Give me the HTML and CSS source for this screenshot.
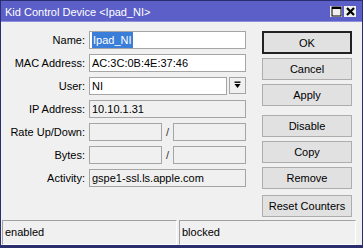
FILE: index.html
```html
<!DOCTYPE html>
<html>
<head>
<meta charset="utf-8">
<link rel="stylesheet" href="styles.css">
</head>
<body>
<div class="window">
  <div class="titlebar">
    <span class="title">Kid Control Device &lt;Ipad_NI&gt;</span>
    <div class="ctrls">
      <span class="ctrl"><svg width="11" height="11" viewBox="0 0 11 11"><rect x="1" y="1" width="9" height="9" fill="none" stroke="#000" stroke-width="1"/><rect x="1" y="1" width="9" height="2" fill="#000"/></svg></span>
      <span class="ctrl"><svg width="11" height="11" viewBox="0 0 11 11"><path d="M2 2 L9 9 M9 2 L2 9" stroke="#000" stroke-width="2.2"/></svg></span>
    </div>
  </div>
  <div class="body">
    <div class="form">
      <label class="lbl">Name:</label>
      <div class="field"><span class="sel">Ipad_NI</span></div>
      <label class="lbl">MAC Address:</label>
      <div class="field">AC:3C:0B:4E:37:46</div>
      <label class="lbl">User:</label>
      <div class="combo"><div class="field">NI</div><div class="drop"><svg width="9" height="9" viewBox="0 0 9 9"><rect x="1.5" y="0.5" width="6" height="1.4" fill="#000"/><path d="M1.5 3 H7.5 L4.5 7 Z" fill="#000"/></svg></div></div>
      <label class="lbl">IP Address:</label>
      <div class="field ro">10.10.1.31</div>
      <label class="lbl">Rate Up/Down:</label>
      <div class="pair"><div class="field ro"></div><span class="slash">/</span><div class="field ro"></div></div>
      <label class="lbl">Bytes:</label>
      <div class="pair"><div class="field ro"></div><span class="slash">/</span><div class="field ro"></div></div>
      <label class="lbl">Activity:</label>
      <div class="field ro">gspe1-ssl.ls.apple.com</div>
    </div>
    <div class="buttons">
      <button class="btn default">OK</button>
      <button class="btn">Cancel</button>
      <button class="btn">Apply</button>
      <button class="btn sep">Disable</button>
      <button class="btn">Copy</button>
      <button class="btn">Remove</button>
      <button class="btn sep2">Reset Counters</button>
    </div>
  </div>
  <div class="status">
    <div class="cell first">enabled</div>
    <div class="cell second">blocked</div>
  </div>
</div>
</body>
</html>
```

FILE: styles.css
```css
* { box-sizing: border-box; }
html, body { margin: 0; padding: 0; }
body {
  width: 363px;
  height: 248px;
  overflow: hidden;
  font-family: "Liberation Sans", Arial, sans-serif;
  font-size: 11px;
  color: #000;
  background: #f0f0f0;
}
.window {
  width: 363px;
  height: 248px;
  border: 1px solid #2b2e6e;
  border-bottom-width: 3px;
  background: #f0f0f0;
  display: flex;
  flex-direction: column;
}
.titlebar {
  height: 21px;
  background: #5b5fc7;
  display: flex;
  align-items: center;
  justify-content: space-between;
  padding: 0 6px 0 4px;
  border-bottom: 1px solid #8d90d8;
}
.title {
  color: #fff;
  font-size: 11px;
  padding-top: 1px;
}
.ctrls {
  display: flex;
  gap: 2px;
  padding-top: 1px;
}
.ctrl {
  width: 12px;
  height: 11px;
  background: #f0f0f0;
  display: flex;
  align-items: center;
  justify-content: center;
}
.body {
  flex: 1;
  display: flex;
  padding-top: 9px;
  gap: 16px;
}
.form {
  display: grid;
  grid-template-columns: 84px 157px;
  grid-auto-rows: 18px;
  column-gap: 4px;
  row-gap: 5px;
  align-content: start;
}
.lbl {
  text-align: right;
  line-height: 18px;
  white-space: nowrap;
}
.field {
  height: 18px;
  background: #fff;
  border: 1px solid #a5a5a5;
  padding: 0 2px;
  line-height: 16px;
  white-space: nowrap;
  overflow: hidden;
}
.field.ro { background: #f0f0f0; }
.sel {
  background: #3a7ed9;
  color: #fff;
  padding: 0 1px;
  display: inline-block;
  line-height: 16px;
}
.combo {
  display: flex;
  gap: 2px;
}
.combo .field { flex: 1; }
.drop {
  width: 17px;
  height: 17px;
  border: 1px solid #a5a5a5;
  background: #f0f0f0;
  display: flex;
  align-items: center;
  justify-content: center;
}
.pair {
  display: flex;
  align-items: center;
}
.pair .field { width: 73px; flex: none; }
.slash {
  width: 11px;
  text-align: center;
  color: #333;
}
.buttons {
  width: 90px;
  display: flex;
  flex-direction: column;
  gap: 4px;
}
.btn {
  height: 22px;
  width: 90px;
  background: #e1e1e1;
  border: 1px solid #adadad;
  font-family: "Liberation Sans", Arial, sans-serif;
  font-size: 11px;
  color: #000;
  padding: 0;
}
.btn.default {
  border: 2px solid #222;
  height: 23px;
}
.btn.sep { margin-top: 5px; }
.btn.sep2 { margin-top: 2px; }
.status {
  height: 25px;
  display: flex;
  padding: 0 6px 0 1px;
  gap: 2px;
}
.cell {
  border-top: 1px solid #a0a0a0;
  border-left: 1px solid #a0a0a0;
  border-right: 1px solid #fff;
  border-bottom: 1px solid #fff;
  padding: 3px 2px 0 2px;
  line-height: 16px;
}
.cell.first { width: 175px; }
.cell.second { flex: 1; }
```
